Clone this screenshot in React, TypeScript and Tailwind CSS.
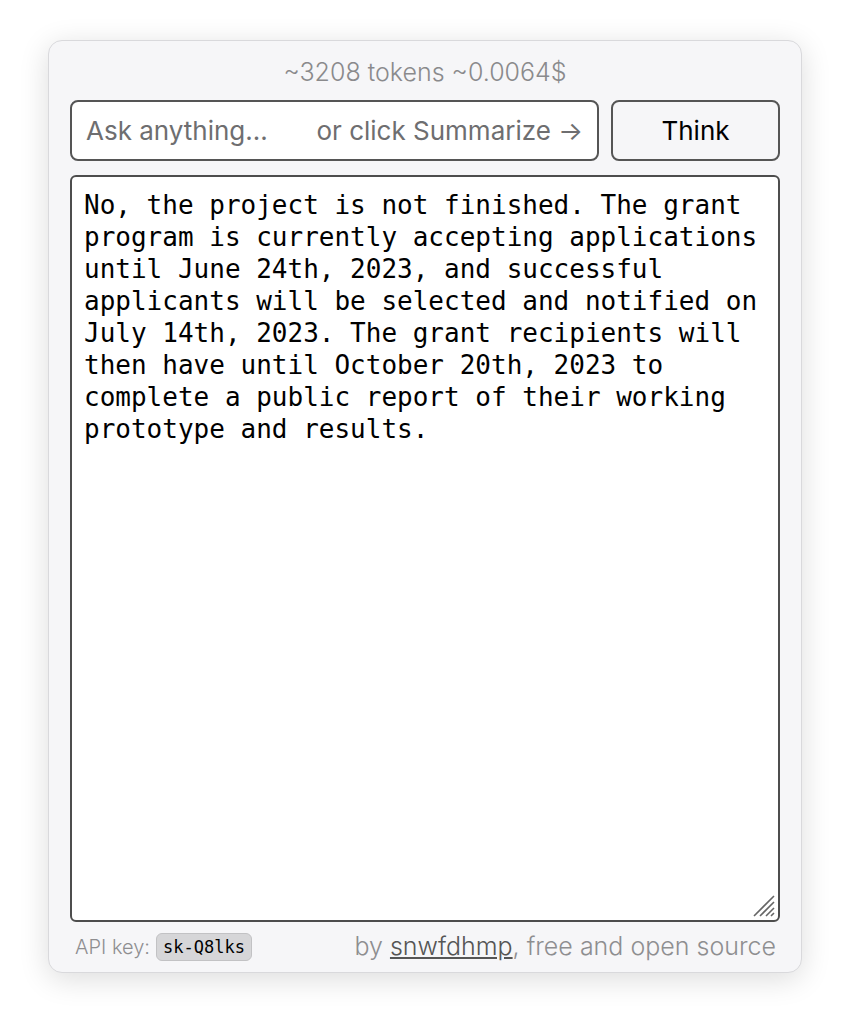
import React from "react";

const TEXT =
  "No, the project is not finished. The grant program is currently accepting applications until June 24th, 2023, and successful applicants will be selected and notified on July 14th, 2023. The grant recipients will then have until October 20th, 2023 to complete a public report of their working prototype and results.";

export default function App() {
  return (
    <div className="w-[850px] h-[1030px] bg-white pt-[40px] pl-[48px]" style={{ fontFamily: "Inter, 'Noto Sans', sans-serif" }}>
      <div className="w-[754px] h-[933px] flex flex-col rounded-[14px] border border-[#d9d9dc] bg-[#f6f6f8] px-[21px] pt-[15px] shadow-[0_6px_30px_rgba(0,0,0,0.14)]">
        <div className="h-[32px] leading-[32px] text-center text-[25px] font-light text-[#8a8a8c] mb-[12px]">
          ~3208 tokens ~0.0064$
        </div>
        <div className="flex h-[61px] gap-[12px]">
          <div className="flex-1 flex items-center justify-between rounded-[8px] border-2 border-[#555] bg-white pl-[14px] pr-[14px] text-[26px] text-[#6e6e70]">
            <span>Ask anything...</span>
            <span>or click Summarize →</span>
          </div>
          <div className="w-[169px] flex items-center justify-center rounded-[8px] border-2 border-[#555] bg-[#f6f6f8] text-[26px] text-black">
            Think
          </div>
        </div>
        <div className="relative mt-[14px] h-[747px] rounded-[6px] border-2 border-[#4d4d4d] bg-white px-[12px] py-[12px]">
          <div
            className="text-[26px] leading-[32px] text-black whitespace-pre-wrap"
            style={{ fontFamily: "'DejaVu Sans Mono', monospace" }}
          >
            {TEXT}
          </div>
          <svg className="absolute right-[2px] bottom-[2px]" width="24" height="24" viewBox="0 0 24 24">
            <path d="M2 22 L22 2 M8 22 L22 8 M14 22 L22 14 M19 22 L22 19" stroke="#666" strokeWidth="1.6" />
          </svg>
        </div>
        <div className="flex h-[50px] items-center justify-between font-light text-[#8e8e90] pl-[5px] pr-[4px]">
          <div className="flex items-center gap-[6px] text-[20px]">
            <span>API key:</span>
            <span
              className="rounded-[6px] border border-[#c2c2c4] bg-[#d6d6d8] px-[6px] text-[17px] leading-[26px] text-black font-normal"
              style={{ fontFamily: "'DejaVu Sans Mono', monospace" }}
            >
              sk-Q8lks
            </span>
          </div>
          <div className="text-[25px]">
            by <span className="underline text-[#555]">snwfdhmp</span>, free and open source
          </div>
        </div>
      </div>
    </div>
  );
}
